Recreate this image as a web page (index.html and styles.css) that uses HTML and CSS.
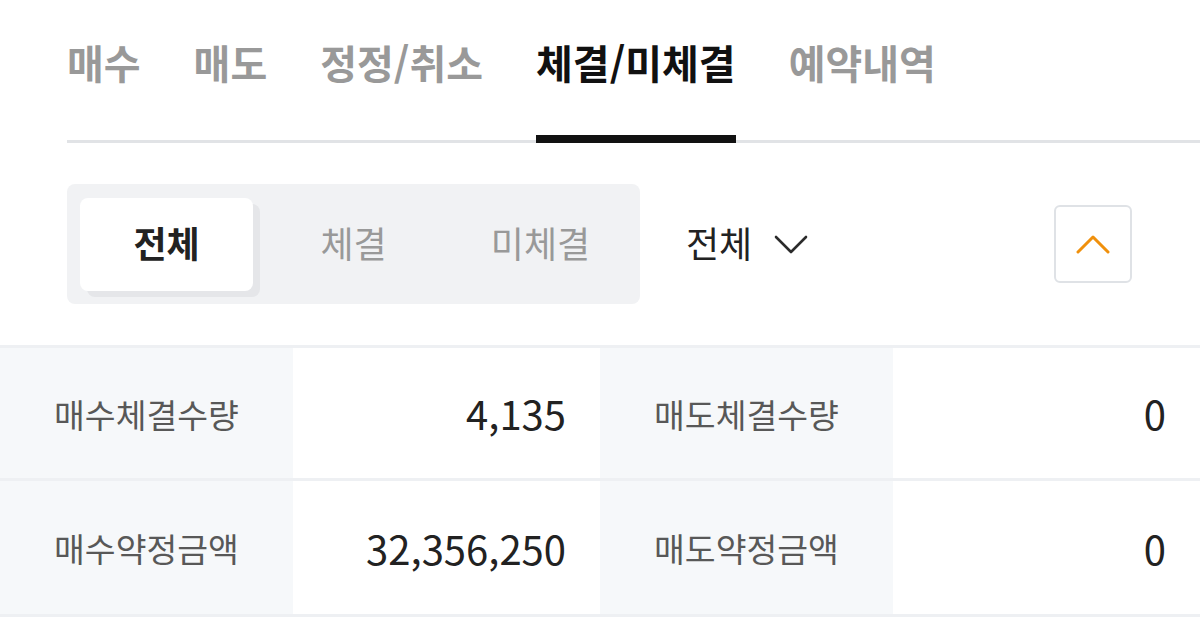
FILE: index.html
```html
<!DOCTYPE html>
<html lang="ko">
<head>
  <meta charset="UTF-8">
  <meta name="viewport" content="width=device-width, initial-scale=1.0">
  <title>체결/미체결</title>
  <link rel="stylesheet" href="styles.css">
</head>
<body>
  <!-- Order tabs -->
  <nav class="tabs">
    <a href="#" class="tab">매수</a>
    <a href="#" class="tab">매도</a>
    <a href="#" class="tab">정정/취소</a>
    <a href="#" class="tab active">체결/미체결</a>
    <a href="#" class="tab">예약내역</a>
  </nav>

  <!-- Filter bar -->
  <div class="toolbar">
    <div class="segmented">
      <button type="button" class="segment active">전체</button>
      <button type="button" class="segment">체결</button>
      <button type="button" class="segment">미체결</button>
    </div>

    <button type="button" class="dropdown">
      전체
      <svg class="chevron-down" width="34" height="20" viewBox="0 0 34 20" fill="none">
        <path d="M2 2 L17 17 L32 2" stroke="#2b2b2b" stroke-width="2.6" stroke-linecap="round" stroke-linejoin="round"/>
      </svg>
    </button>

    <button type="button" class="collapse-btn" aria-label="접기">
      <svg width="34" height="20" viewBox="0 0 34 20" fill="none">
        <path d="M2 18 L17 3 L32 18" stroke="#f0900c" stroke-width="3" stroke-linecap="round" stroke-linejoin="round"/>
      </svg>
    </button>
  </div>

  <!-- Summary -->
  <div class="summary">
    <div class="label">매수체결수량</div>
    <div class="value">4,135</div>
    <div class="label">매도체결수량</div>
    <div class="value">0</div>

    <div class="label">매수약정금액</div>
    <div class="value">32,356,250</div>
    <div class="label">매도약정금액</div>
    <div class="value">0</div>
  </div>
</body>
</html>
```

FILE: styles.css
```css
/* Basic Reset */
* {
  margin: 0;
  padding: 0;
  box-sizing: border-box;
  font-family: "Noto Sans CJK KR", "Noto Sans", sans-serif;
}

body {
  background-color: #fff;
  width: 1200px;
  height: 623px;
  overflow: hidden;
}

button {
  border: none;
  background: none;
  cursor: pointer;
  font: inherit;
}

/* Tabs */
.tabs {
  display: flex;
  gap: 53px;
  margin-left: 67px;
  border-bottom: 3px solid #e1e3e6;
}

.tab {
  display: block;
  padding: 34px 0 45px;
  line-height: 56px;
  font-size: 40px;
  font-weight: 700;
  color: #999;
  text-decoration: none;
  border-bottom: 8px solid transparent;
  margin-bottom: -3px;
}

.tab.active {
  color: #111;
  border-bottom-color: #111;
}

/* Filter bar */
.toolbar {
  display: flex;
  align-items: center;
  padding: 0 68px 0 67px;
  margin-top: 41px;
}

.segmented {
  display: grid;
  grid-template-columns: repeat(3, 173px);
  gap: 14px;
  width: 573px;
  padding: 14px 13px 13px;
  background-color: #f1f2f4;
  border-radius: 8px;
}

.segment {
  height: 93px;
  padding-bottom: 6px;
  font-size: 36px;
  color: #999;
  border-radius: 8px;
}

.segment.active {
  background-color: #fff;
  color: #222;
  font-weight: 700;
  box-shadow: 7px 6px 0 #e5e6e9;
}

.dropdown {
  display: flex;
  align-items: center;
  gap: 22px;
  margin-left: 46px;
  padding-bottom: 4px;
  font-size: 36px;
  color: #222;
}

.chevron-down {
  margin-top: 6px;
}

.collapse-btn {
  margin-left: auto;
  width: 78px;
  height: 78px;
  border: 2px solid #dfe2e6;
  border-radius: 6px;
  display: flex;
  align-items: center;
  justify-content: center;
}

/* Summary grid */
.summary {
  display: grid;
  grid-template-columns: 293px 307px 293px 307px;
  grid-template-rows: 133px 136px;
  margin-top: 41px;
  border-top: 3px solid #eef0f3;
}

.label,
.value {
  display: flex;
  align-items: center;
  border-bottom: 3px solid #eef0f3;
}

.label {
  padding-left: 54px;
  background-color: #f6f8fa;
  font-size: 33.5px;
  color: #585858;
}

.value {
  justify-content: flex-end;
  padding-right: 34px;
  font-size: 40px;
  color: #222;
}
```
